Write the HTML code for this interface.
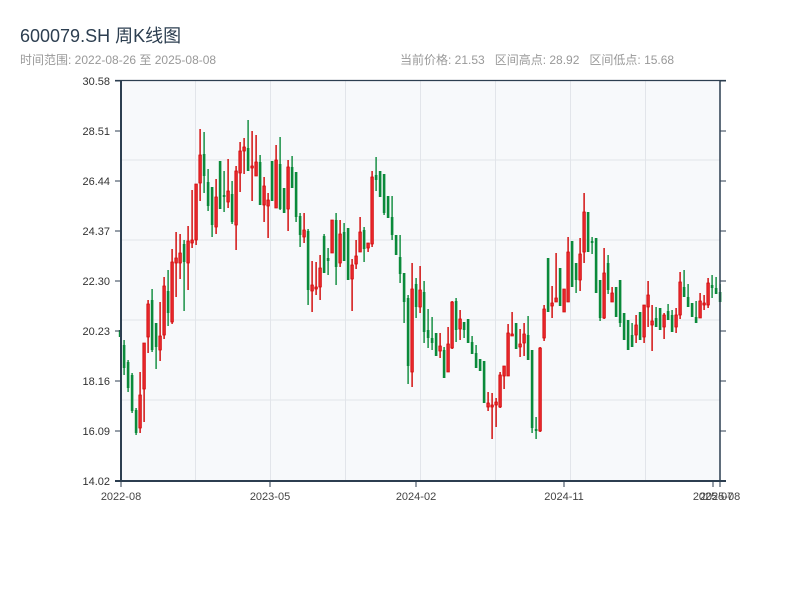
<!DOCTYPE html>
<html><head><meta charset="utf-8"><style>
body{margin:0;width:800px;height:600px;background:#fff;overflow:hidden;font-family:"Liberation Sans","Noto Sans CJK SC",sans-serif;}
.t{position:absolute;left:20px;top:22px;font-size:18px;color:#2c3e50;}
.s{position:absolute;left:20px;top:51px;font-size:12px;color:#999;}
.r{position:absolute;left:400px;top:51px;font-size:12px;color:#999;white-space:pre;}
svg{position:absolute;left:0;top:0}
</style></head><body>
<div class="t">600079.SH 周K线图</div>
<div class="s">时间范围: 2022-08-26 至 2025-08-08</div>
<div class="r">当前价格: 21.53   区间高点: 28.92   区间低点: 15.68</div>
<svg id="c" width="800" height="600" xmlns="http://www.w3.org/2000/svg" font-family="Liberation Sans, sans-serif" font-size="11"></svg>
<script>
var D=[[330,337,330,337,0],[345,368,340,375,0],[362,388,360,392,0],[375,411,373,413,0],[410,433,408,435,0],[395,428,372,433,1],[343,389,343,422,1],[304,337,300,353,1],[300,350,289,352,0],[323,347,323,369,0],[336,350,302,361,1],[286,335,277,339,1],[291,313,270,326,0],[262,322,249,324,1],[258,263,232,297,1],[253,263,234,279,1],[244,262,240,311,0],[241,263,226,290,1],[240,243,190,248,1],[184,240,184,245,1],[155,183,129,201,1],[154,176,132,193,0],[182,206,169,211,0],[187,225,187,237,0],[197,227,179,234,1],[161,209,161,209,0],[195,197,171,212,0],[191,202,159,208,1],[194,222,181,224,0],[171,225,166,250,1],[151,173,142,192,1],[147,151,138,174,1],[148,171,120,171,0],[166,168,131,201,1],[162,176,135,176,1],[162,205,155,205,0],[186,205,177,222,1],[200,206,193,238,1],[161,201,161,201,0],[160,208,145,208,1],[164,209,137,210,0],[188,213,188,213,0],[167,209,160,231,1],[167,188,156,188,0],[172,217,172,222,0],[216,235,213,247,0],[230,237,213,243,1],[231,290,229,305,0],[285,291,261,312,1],[287,289,262,295,1],[268,287,255,300,1],[236,273,234,273,0],[258,261,248,275,0],[220,253,220,253,1],[220,267,213,285,0],[234,263,220,267,1],[232,261,223,261,0],[228,280,228,280,0],[265,279,259,311,1],[256,264,240,269,1],[232,252,217,252,1],[230,249,227,262,0],[243,248,243,252,1],[177,244,171,247,1],[175,180,157,191,0],[171,197,171,197,0],[174,213,174,215,0],[196,218,196,218,0],[217,235,196,240,0],[235,255,235,255,0],[257,274,235,283,0],[273,302,273,323,0],[298,366,295,384,0],[289,372,263,387,1],[284,307,278,318,0],[290,307,266,313,1],[292,332,281,343,0],[330,338,309,348,0],[338,343,317,350,0],[333,356,333,356,0],[346,351,333,358,1],[350,378,347,378,0],[344,372,327,372,1],[302,348,301,349,1],[301,330,298,342,0],[319,329,310,340,1],[322,330,322,338,0],[319,343,319,343,0],[342,354,336,354,0],[353,368,345,368,0],[359,371,359,371,0],[361,403,361,403,0],[403,407,392,411,1],[405,407,393,439,1],[402,405,398,427,1],[375,407,372,408,1],[366,376,366,389,1],[333,376,324,376,1],[334,336,312,336,1],[323,349,323,349,0],[344,347,329,357,1],[334,343,323,356,1],[335,360,316,360,0],[350,428,350,433,0],[429,431,417,439,0],[348,431,347,432,1],[309,338,305,341,1],[258,312,258,312,0],[303,306,286,318,1],[298,302,253,302,1],[268,306,268,306,0],[289,312,289,312,1],[252,302,237,302,1],[241,287,241,287,0],[263,280,263,293,0],[254,280,238,291,1],[212,252,193,263,1],[212,252,212,252,0],[241,243,237,254,0],[238,293,238,293,0],[280,318,280,321,0],[273,318,248,319,1],[263,290,255,294,0],[293,302,287,302,1],[287,317,287,317,0],[280,323,280,327,0],[313,340,313,340,0],[320,350,320,350,0],[335,347,323,347,0],[325,335,315,343,1],[312,340,312,340,0],[305,337,305,343,1],[295,307,281,327,1],[321,325,305,351,1],[318,327,307,327,0],[308,330,308,330,0],[315,327,313,339,1],[311,320,304,320,0],[315,332,310,332,0],[315,327,308,333,1],[282,315,272,319,1],[287,297,270,297,0],[297,307,284,307,0],[303,317,303,317,0],[317,323,301,323,0],[301,318,293,318,1],[303,305,295,310,1],[283,305,278,308,1],[285,288,275,298,0],[288,294,277,294,0],[292,302,284,302,0]];
var s='<rect x="121" y="80" width="599" height="401" fill="#f7f9fb"/>';
[160,240,320,400].forEach(function(y){s+='<line x1="121" x2="720" y1="'+y+'" y2="'+y+'" stroke="#e2e5ea" stroke-width="1"/>';});
[195.5,270.5,345.5,420.5,495.5,570.5,645.5].forEach(function(x){s+='<line y1="80" y2="481" x1="'+x+'" x2="'+x+'" stroke="#e2e5ea" stroke-width="1"/>';});
D.forEach(function(d,i){var cx=120+4*i;var col=d[4]?'#d00000':'#0a8a3a';
s+='<rect x="'+(cx-0.6)+'" y="'+d[2]+'" width="1.4" height="'+Math.max(1,d[3]-d[2])+'" fill="'+col+'"/>';
s+='<rect x="'+(cx-1.2)+'" y="'+d[0]+'" width="2.6" height="'+Math.max(1,d[1]-d[0])+'" fill="'+(d[4]?'#e8262b':col)+'" stroke="'+(d[4]?'#d00000':'none')+'" stroke-width="0.7"/>';});
var ax='#2c3e50';
s+='<line x1="121" x2="121" y1="80" y2="482" stroke="'+ax+'" stroke-width="2"/>';
s+='<line x1="720" x2="720" y1="80" y2="482" stroke="'+ax+'" stroke-width="1.5"/>';
s+='<line x1="115" x2="726" y1="80.5" y2="80.5" stroke="'+ax+'" stroke-width="1.2"/>';
s+='<line x1="115" x2="726" y1="481" y2="481" stroke="'+ax+'" stroke-width="2"/>';
var lab=['30.58','28.51','26.44','24.37','22.30','20.23','18.16','16.09','14.02'];
lab.forEach(function(l,i){var y=81+50*i;s+='<line x1="115" x2="121" y1="'+y+'" y2="'+y+'" stroke="'+ax+'"/><line x1="720" x2="726" y1="'+y+'" y2="'+y+'" stroke="'+ax+'"/><text x="110" y="'+(y+4)+'" text-anchor="end" fill="#333">'+l+'</text>';});
[[121,'2022-08'],[270,'2023-05'],[416,'2024-02'],[564,'2024-11'],[713,'2025-07'],[720,'2025-08']].forEach(function(t){s+='<line x1="'+t[0]+'" x2="'+t[0]+'" y1="481" y2="487" stroke="'+ax+'"/><text x="'+t[0]+'" y="500" text-anchor="middle" fill="#444">'+t[1]+'</text>';});
document.getElementById('c').innerHTML=s;
</script>
</body></html>
